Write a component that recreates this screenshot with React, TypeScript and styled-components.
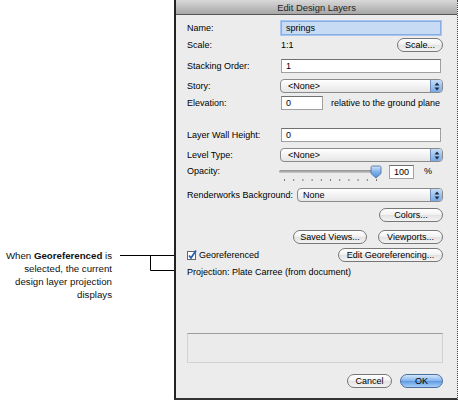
import styled, { createGlobalStyle } from "styled-components";

const GlobalStyle = createGlobalStyle`
	* {
		box-sizing: border-box;
	}
	body {
		margin: 0;
		background: #ffffff;
	}
`;

const FONT = `"Liberation Sans", Arial, sans-serif`;

const Page = styled.div`
	display: flex;
	width: 458px;
	height: 400px;
	background: #ffffff;
	overflow: hidden;
`;

const Aside = styled.aside`
	flex: none;
	width: 174px;
	display: flex;
	align-items: flex-start;
	padding-top: 249px;
`;

const Note = styled.div`
	width: 112px;
	display: flex;
	flex-direction: column;
	align-items: flex-end;
	font-family: ${FONT};
	font-size: 9.7px;
	line-height: 13px;
	color: #111;
`;

const NoteLine = styled.span`
	display: block;
	white-space: nowrap;
	text-align: right;
`;

const Strong = styled.b`
	font-weight: bold;
`;

const Leader = styled.svg`
	flex: none;
	display: block;
`;

const Dialog = styled.section`
	flex: none;
	width: 284px;
	height: 400px;
	display: flex;
	flex-direction: column;
	background: #ececec;
	border-left: 2px solid #222;
	border-right: 1px dotted #444;
	border-bottom: 2px solid #333;
	font-family: ${FONT};
	font-size: 9px;
	color: #000;
`;

const TitleBar = styled.header`
	flex: none;
	height: 15px;
	display: flex;
	align-items: center;
	justify-content: center;
	background: linear-gradient(#d9d9d9, #a6a6a6);
	border-bottom: 1px solid #555;
	font-size: 9.4px;
	color: #222;
`;

const Body = styled.div`
	flex: 1;
	display: flex;
	flex-direction: column;
	padding: 0 14px 0 11px;
`;

const Row = styled.div<{ $gap: number; $h?: number; $end?: boolean }>`
	display: flex;
	align-items: center;
	justify-content: ${({ $end }) => ($end ? "flex-end" : "flex-start")};
	margin-top: ${({ $gap }) => $gap}px;
	height: ${({ $h }) => $h ?? 14}px;
`;

const Label = styled.span<{ $w?: number }>`
	flex: none;
	width: ${({ $w }) => $w ?? 94}px;
	white-space: nowrap;
`;

const TopLabel = styled(Label)`
	align-self: flex-start;
	margin-top: 1px;
`;

const Value = styled.span`
	flex: 1;
`;

const Field = styled.div<{ $w?: number; $focus?: boolean }>`
	flex: ${({ $w }) => ($w ? "none" : "1")};
	width: ${({ $w }) => ($w ? `${$w}px` : "auto")};
	height: 14px;
	margin-right: ${({ $w }) => ($w ? 0 : 2)}px;
	padding: 0 4px;
	display: flex;
	align-items: center;
	background: ${({ $focus }) => ($focus ? "#c8dbf5" : "#ffffff")};
	border: 1px solid ${({ $focus }) => ($focus ? "#86aee0" : "#a0a0a0")};
	border-top-color: ${({ $focus }) => ($focus ? "#86aee0" : "#707070")};
	box-shadow: ${({ $focus }) => ($focus ? "0 0 0 1px #a9c7ee" : "none")};
	white-space: nowrap;
`;

const TopField = styled(Field)`
	align-self: flex-start;
`;

const Select = styled.div<{ $shift?: number }>`
	flex: 1;
	height: 14px;
	margin-left: ${({ $shift }) => $shift ?? -1}px;
	display: flex;
	align-items: center;
	border: 1px solid #8a8a8a;
	border-radius: 4px;
	background: linear-gradient(#ffffff, #e6e6e6);
	overflow: hidden;
`;

const SelectText = styled.span<{ $pad?: number }>`
	flex: 1;
	padding-left: ${({ $pad }) => $pad ?? 7}px;
`;

const SelectArrows = styled.span`
	flex: none;
	width: 12px;
	height: 100%;
	display: flex;
	align-items: center;
	justify-content: center;
	background: linear-gradient(#c4dcf8, #79aae6);
	border-left: 1px solid #6f8fb8;
`;

const Button = styled.button<{ $w: number; $primary?: boolean }>`
	flex: none;
	width: ${({ $w }) => $w}px;
	height: 14px;
	padding: 0;
	border: 1px solid ${({ $primary }) => ($primary ? "#4a6f9e" : "#777")};
	border-radius: 7px;
	background: ${({ $primary }) =>
		$primary
			? "linear-gradient(#d3e6fb, #7fb2ec 50%, #5c9ae3 51%, #a9d0f8)"
			: "linear-gradient(#ffffff, #f0f0f0 50%, #e2e2e2 51%, #f4f4f4)"};
	font-family: ${FONT};
	font-size: 9px;
	color: #000;
	line-height: 12px;
`;

const Spacer = styled.span<{ $w: number }>`
	flex: none;
	width: ${({ $w }) => $w}px;
`;

const Suffix = styled.span<{ $gap: number; $top?: boolean }>`
	margin-left: ${({ $gap }) => $gap}px;
	white-space: nowrap;
	align-self: ${({ $top }) => ($top ? "flex-start" : "center")};
	margin-top: ${({ $top }) => ($top ? 1 : 0)}px;
`;

const Check = styled.label`
	flex: 1;
	display: flex;
	align-items: center;
	gap: 2px;
`;

const SliderSvg = styled.svg`
	flex: none;
	align-self: flex-start;
	margin-left: -2px;
`;

const GroupBox = styled.div`
	margin-top: 54px;
	height: 30px;
	background: #ebebeb;
	border: 1px solid #d2d2d2;
	border-top-color: #9c9c9c;
`;

const Arrows = () => (
	<svg width="6" height="9" viewBox="0 0 6 9">
		<path d="M3 0.5 L5.5 3.5 H0.5 Z" fill="#1d2c44" />
		<path d="M3 8.5 L5.5 5.5 H0.5 Z" fill="#1d2c44" />
	</svg>
);

const CheckBox = () => (
	<svg width="10" height="10" viewBox="0 0 10 10">
		<rect x="0.5" y="1.5" width="8" height="8" fill="#fff" stroke="#666" />
		<path d="M2 5.5 L4 8 L9 0.5" fill="none" stroke="#2b5fb5" strokeWidth="1.8" />
	</svg>
);

const Slider = () => {
	const ticks = Array.from({ length: 11 }, (_, i) => 5 + i * 9.2);
	return (
		<SliderSvg width="104" height="18" viewBox="0 0 104 18">
			<defs>
				<linearGradient id="track" x1="0" y1="0" x2="0" y2="1">
					<stop offset="0" stopColor="#8e8e8e" />
					<stop offset="1" stopColor="#c9c9c9" />
				</linearGradient>
				<linearGradient id="thumb" x1="0" y1="0" x2="0" y2="1">
					<stop offset="0" stopColor="#cfe3fa" />
					<stop offset="0.5" stopColor="#7fb1ea" />
					<stop offset="1" stopColor="#4e8fdc" />
				</linearGradient>
			</defs>
			<rect x="0" y="5" width="98" height="3" rx="1.5" fill="url(#track)" />
			<path
				d="M93.5 1 H100.5 A1.5 1.5 0 0 1 102 2.5 V8.5 L97 13 L92 8.5 V2.5 A1.5 1.5 0 0 1 93.5 1 Z"
				fill="url(#thumb)"
				stroke="#4a6b96"
				strokeWidth="0.8"
			/>
			{ticks.map((x) => (
				<rect key={x} x={x} y="14" width="1" height="2" fill="#777" />
			))}
		</SliderSvg>
	);
};

const PopUp = ({ text, shift, pad }: { text: string; shift?: number; pad?: number }) => (
	<Select $shift={shift}>
		<SelectText $pad={pad}>{text}</SelectText>
		<SelectArrows>
			<Arrows />
		</SelectArrows>
	</Select>
);

const App = () => {
	return (
		<>
			<GlobalStyle />
			<Page>
				<Aside>
					<Note>
						<NoteLine>
							When <Strong>Georeferenced</Strong> is
						</NoteLine>
						<NoteLine>selected, the current</NoteLine>
						<NoteLine>design layer projection</NoteLine>
						<NoteLine>displays</NoteLine>
					</Note>
					<Leader width="62" height="24" viewBox="0 0 62 24">
						<path d="M8 6.5 H62 M38.5 6.5 V21.5 H62" fill="none" stroke="#000" strokeWidth="1" />
					</Leader>
				</Aside>
				<Dialog>
					<TitleBar>Edit Design Layers</TitleBar>
					<Body>
						<Row $gap={6}>
							<Label>Name:</Label>
							<Field $focus>springs</Field>
						</Row>
						<Row $gap={3}>
							<Label>Scale:</Label>
							<Value>1:1</Value>
							<Button $w={46}>Scale...</Button>
						</Row>
						<Row $gap={7}>
							<Label>Stacking Order:</Label>
							<Field>1</Field>
						</Row>
						<Row $gap={6}>
							<Label>Story:</Label>
							<PopUp text="<None>" />
						</Row>
						<Row $gap={2} $h={15}>
							<Label>Elevation:</Label>
							<Field $w={42}>0</Field>
							<Suffix $gap={8}>relative to the ground plane</Suffix>
						</Row>
						<Row $gap={18}>
							<Label>Layer Wall Height:</Label>
							<Field>0</Field>
						</Row>
						<Row $gap={6}>
							<Label>Level Type:</Label>
							<PopUp text="<None>" />
						</Row>
						<Row $gap={3} $h={18}>
							<TopLabel>Opacity:</TopLabel>
							<Slider />
							<Spacer $w={6} />
							<TopField $w={25}>100</TopField>
							<Suffix $gap={10} $top>
								%
							</Suffix>
						</Row>
						<Row $gap={5}>
							<Label $w={110}>Renderworks Background:</Label>
							<PopUp text="None" shift={0} pad={5} />
						</Row>
						<Row $gap={6} $end>
							<Button $w={64}>Colors...</Button>
						</Row>
						<Row $gap={8} $end>
							<Button $w={74}>Saved Views...</Button>
							<Spacer $w={11} />
							<Button $w={65}>Viewports...</Button>
						</Row>
						<Row $gap={4}>
							<Check>
								<CheckBox />
								Georeferenced
							</Check>
							<Button $w={105}>Edit Georeferencing...</Button>
						</Row>
						<Row $gap={3}>
							<Value>Projection: Plate Carree (from document)</Value>
						</Row>
						<GroupBox />
						<Row $gap={11} $end>
							<Button $w={45}>Cancel</Button>
							<Spacer $w={8} />
							<Button $w={43} $primary>
								OK
							</Button>
						</Row>
					</Body>
				</Dialog>
			</Page>
		</>
	);
};

export default App;
